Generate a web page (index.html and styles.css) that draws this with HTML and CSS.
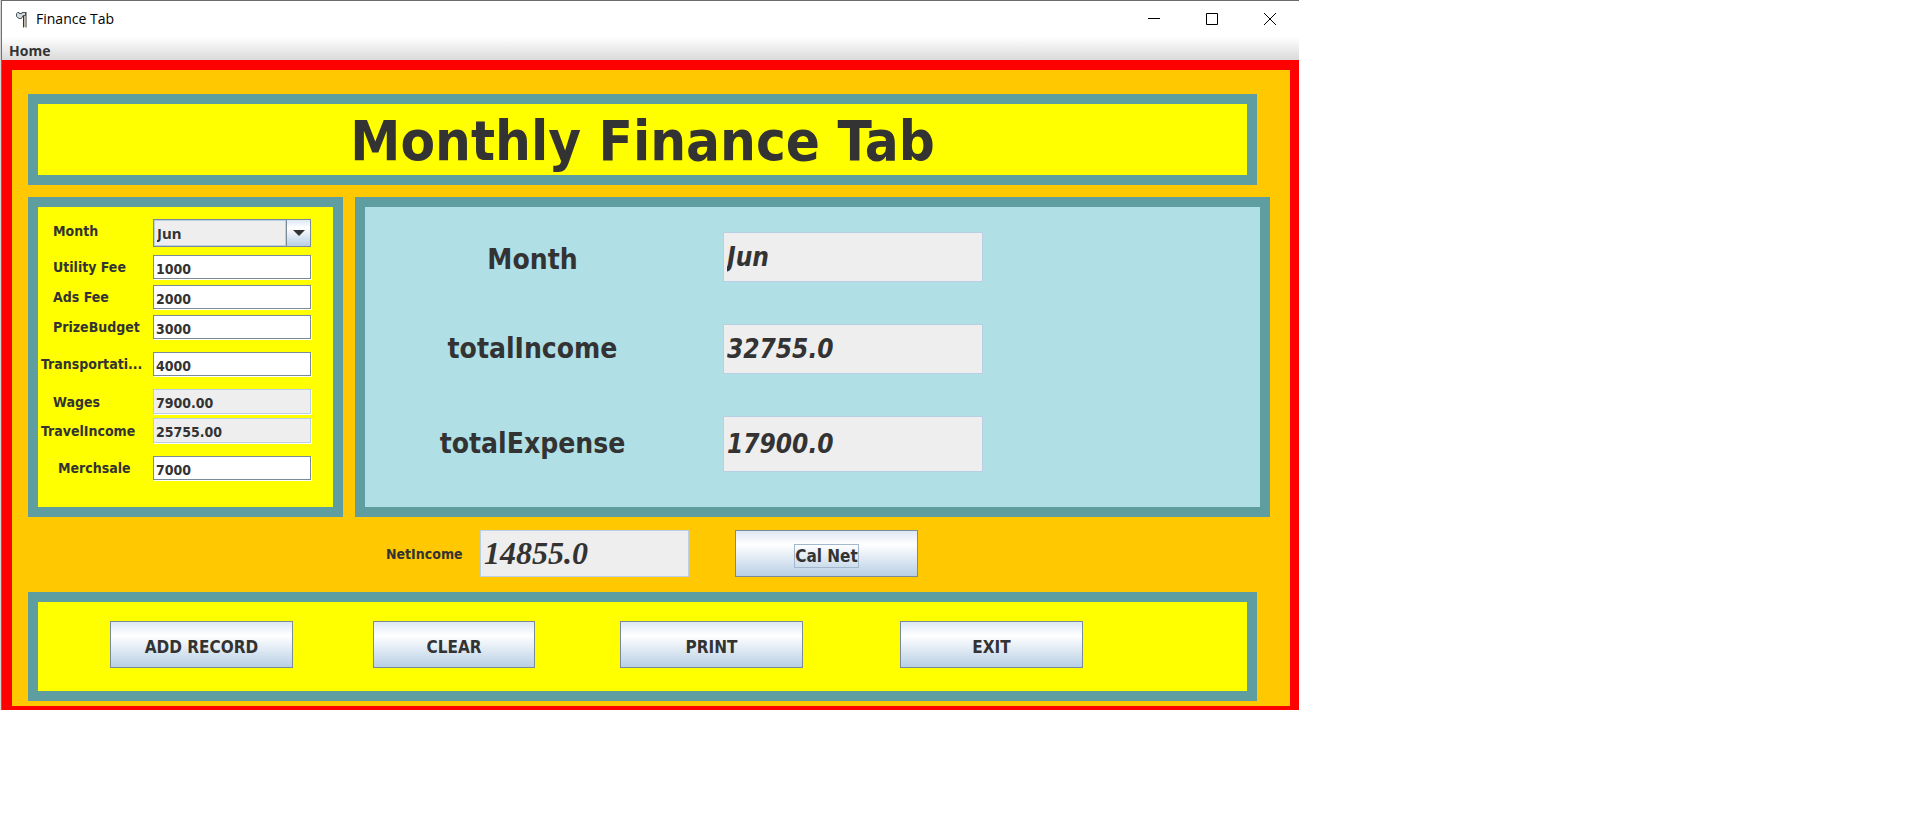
FILE: index.html
```html
<!DOCTYPE html>
<html lang="en">
<head>
<meta charset="utf-8">
<title>Finance Tab</title>
<link rel="stylesheet" href="styles.css">
</head>
<body>
<div class="window">
  <header class="titlebar">
    <svg class="app-icon" width="12" height="17" viewBox="0 0 12 17" aria-hidden="true">
      <path d="M1.500 1.500h1.500v1h3v-1h3.500v3H7L5.500 7.500H3L.5 5.500v-3z" fill="#d5dadd" stroke="#4b555c"/>
      <path d="M7.500 5v11.500M10 1v15.500" stroke="#33383c"/>
      <path d="M8.750 5v11" stroke="#b9a58c"/>
    </svg>
    <span class="title">Finance Tab</span>
    <div class="controls">
      <button class="control" aria-label="Minimize"><svg width="12" height="12" viewBox="0 0 12 12"><path d="M0 5.500h12" stroke="#000"/></svg></button>
      <button class="control" aria-label="Maximize"><svg width="12" height="12" viewBox="0 0 12 12"><path d="M.5.5h11v11H.5z" fill="none" stroke="#000"/></svg></button>
      <button class="control" aria-label="Close"><svg width="12" height="12" viewBox="0 0 12 12"><path d="M0 0l12 12M12 0L0 12" stroke="#000"/></svg></button>
    </div>
  </header>
  <nav class="menubar"><a class="menu" href="#home">Home</a></nav>
  <main class="content">
    <div class="panel heading-panel"><h1 class="heading">Monthly Finance Tab</h1></div>
    <div class="columns">
      <form class="panel entry">
        <div class="row">
          <label class="label label-month" for="month">Month</label>
          <div class="combo">
            <select class="select" id="month"><option>Jun</option></select>
            <span class="arrow"><svg width="12" height="6" viewBox="0 0 12 6"><path d="M0 0h12L6 6z" fill="#333"/></svg></span>
          </div>
        </div>
        <div class="group group-fees">
          <div class="row"><label class="label" for="utility">Utility Fee</label><input class="field" id="utility" value="1000"></div>
          <div class="row"><label class="label" for="ads">Ads Fee</label><input class="field" id="ads" value="2000"></div>
          <div class="row"><label class="label" for="prize">PrizeBudget</label><input class="field" id="prize" value="3000"></div>
        </div>
        <div class="group"><div class="row"><label class="label label-wide" for="transport">Transportati...</label><input class="field" id="transport" value="4000"></div></div>
        <div class="group group-income">
          <div class="row"><label class="label" for="wages">Wages</label><input class="field locked" id="wages" value="7900.00" readonly></div>
          <div class="row"><label class="label label-wide" for="travel">TravelIncome</label><input class="field locked" id="travel" value="25755.00" readonly></div>
        </div>
        <div class="group"><div class="row"><label class="label label-inset" for="merch">Merchsale</label><input class="field" id="merch" value="7000"></div></div>
      </form>
      <section class="panel summary">
        <label class="total-label total-month" for="out-month">Month</label><input class="total" id="out-month" value="Jun" readonly>
        <label class="total-label" for="out-income">totalIncome</label><input class="total" id="out-income" value="32755.0" readonly>
        <label class="total-label" for="out-expense">totalExpense</label><input class="total" id="out-expense" value="17900.0" readonly>
      </section>
    </div>
    <div class="net-row">
      <label class="net-label" for="net">NetIncome</label>
      <input class="net" id="net" value="14855.0" readonly>
      <button class="button"><span class="focus">Cal Net</span></button>
    </div>
    <div class="panel actions">
      <button class="button">ADD RECORD</button>
      <button class="button button-small">CLEAR</button>
      <button class="button">PRINT</button>
      <button class="button">EXIT</button>
    </div>
  </main>
</div>
</body>
</html>
```
FILE: styles.css
```css
* { box-sizing: border-box; }

body {
  margin: 0;
  background: #fff;
  color: #333;
  font-family: "DejaVu Sans Condensed", "DejaVu Sans", sans-serif;
  font-weight: bold;
}

input, button, select {
  margin: 0;
  color: inherit;
  font: inherit;
}

.window {
  max-width: 1299px;
  padding-left: 1px;
  border-left: 1px solid #d4d4d4;
  background: #6f6f6f;
}

.titlebar {
  display: flex;
  align-items: center;
  height: 37px;
  padding-left: 14px;
  border-top: 1px solid #6a6a6a;
  background: #fff;
}

.title {
  margin-left: 8px;
  color: #000;
  font: 14px/20px "Open Sans", "Noto Sans", sans-serif;
}

.controls { display: flex; margin-left: auto; }

.control {
  display: flex;
  align-items: center;
  justify-content: center;
  width: 58px;
  height: 36px;
  padding: 0;
  border: 0;
  background: none;
}

.menubar {
  display: flex;
  height: 23px;
  padding: 3px 7px 0;
  background: linear-gradient(#fff, #dadada);
}

.menu {
  color: #333;
  font: bold 14px/22px "Open Sans", "Noto Sans", sans-serif;
  text-decoration: none;
}

.content {
  padding: 24px 20px 5px 16px;
  border: solid #f00;
  border-width: 10px 9px 4px 10px;
  background: #ffc800;
}

.panel {
  border: 10px solid #5f9ea0;
  background: #ff0;
}

.heading-panel {
  height: 91px;
  margin-right: 13px;
}

.heading {
  margin: 0;
  padding-top: 5px;
  font-size: 56px;
  line-height: 64px;
  text-align: center;
}

.columns {
  display: grid;
  grid-template-columns: 315px 1fr;
  gap: 12px;
  margin-top: 12px;
}

.entry {
  display: flex;
  flex-direction: column;
  gap: 13px;
  height: 320px;
  padding: 12px 22px 0 0;
  font-size: 14px;
}

.row {
  display: grid;
  grid-template-columns: 115px 1fr;
  align-items: center;
}

.group { display: grid; }
.group-fees { gap: 6px; margin-top: -5px; }
.group-income { gap: 4px; }

.label { padding-left: 15px; white-space: nowrap; }
.label-wide { padding-left: 3px; }
.label-inset { padding-left: 20px; }
.label-month { padding-bottom: 4px; }

.field {
  width: 100%;
  height: 24px;
  padding: 3px 2px 0;
  border: 1px solid #7a8a99;
  background: #fff;
  box-shadow: 1px 1px #fff;
  font-size: 14px;
  outline: 0;
}

.locked {
  height: 25px;
  border-color: #b8cfe5;
  background: #eee;
}

.combo {
  display: grid;
  grid-template-columns: 1fr 24px;
  height: 28px;
  border: 1px solid #7a8a99;
}

.select {
  padding: 0 2px;
  border: 1px solid #b8cfe5;
  border-radius: 0;
  background: #eee;
  font: bold 15px "Noto Sans", sans-serif;
  appearance: none;
}

.arrow {
  display: flex;
  align-items: center;
  justify-content: center;
  border-left: 1px solid #7a8a99;
  background: linear-gradient(#dde8f3, #fff 30%, #b8cfe5);
}

.summary {
  display: grid;
  grid-template-columns: 335px 260px;
  grid-template-rows: 50px 50px 56px;
  gap: 42px 23px;
  padding-top: 25px;
  background: #b0e0e6;
}

.total-label {
  align-self: center;
  font-size: 28px;
  line-height: 32px;
  text-align: center;
}

.total-month { padding-top: 6px; }

.total, .net {
  padding: 0 3px;
  border: 1px solid #b8cfe5;
  background: #eee;
  font-size: 26px;
  font-style: italic;
  outline: 0;
}

.net-row {
  display: flex;
  align-items: center;
  height: 75px;
  padding: 0 0 2px 358px;
}

.net-label { width: 94px; font-size: 14px; }

.net {
  width: 209px;
  height: 47px;
  margin-right: 46px;
  font: italic bold 32px "Liberation Serif", serif;
}

.button {
  width: 183px;
  height: 47px;
  padding: 4px 0 0;
  border: 1px solid #7a8a99;
  background: linear-gradient(#dde8f3, #fff 30%, #b8cfe5);
  font-size: 17px;
}

.button-small { width: 162px; }

.focus { display: inline-block; border: 1px solid #a3b8cc; line-height: 22px; }

.actions {
  display: grid;
  grid-template-columns: 263fr 247fr 280fr 347fr;
  height: 109px;
  margin-right: 13px;
  padding: 19px 0 0 72px;
}
```
